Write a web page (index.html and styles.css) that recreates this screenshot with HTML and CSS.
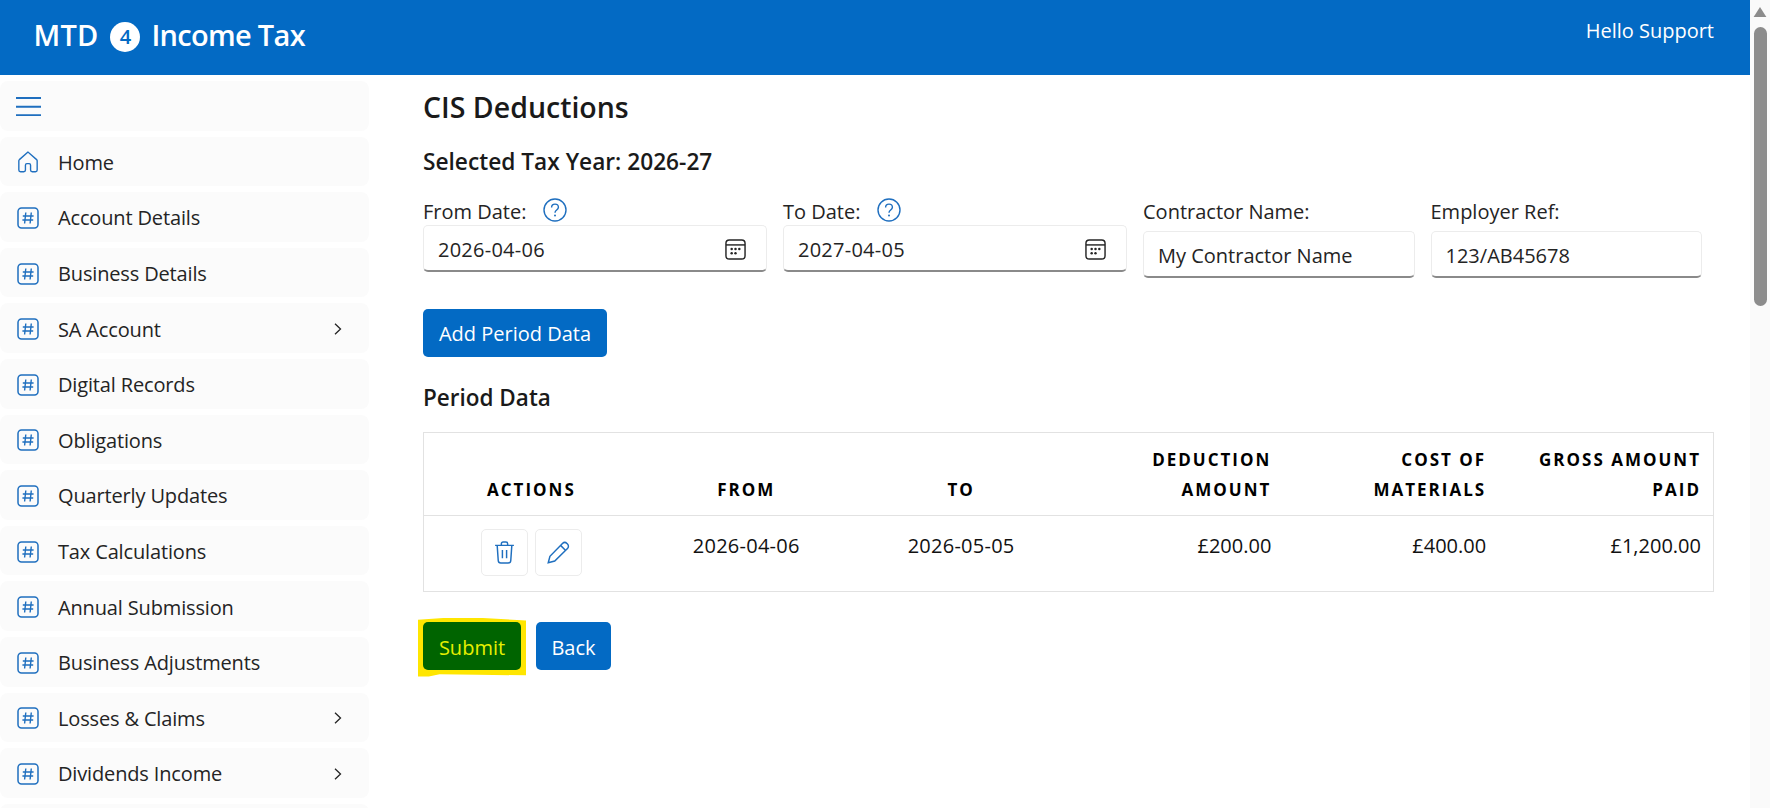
FILE: index.html
```html
<!DOCTYPE html>
<html lang="en">
<head>
<meta charset="utf-8">
<title>CIS Deductions</title>
<link rel="stylesheet" href="styles.css">
</head>
<body>
<svg class="defs" width="0" height="0" aria-hidden="true">
  <symbol id="hash" viewBox="0 0 22 22">
    <rect x="1" y="1" width="20" height="20" rx="3.5" fill="none" stroke="currentColor" stroke-width="1.5"/>
    <path d="M8.8 5.5 7.6 16.5M14.3 5.5l-1.2 11M5.8 9h10.8M5.4 13h10.8" fill="none" stroke="currentColor" stroke-width="1.4"/>
  </symbol>
  <symbol id="chev" viewBox="0 0 8 12">
    <path d="M1 .8 6.5 6 1 11.2" fill="none" stroke="currentColor" stroke-width="1.3"/>
  </symbol>
  <symbol id="help" viewBox="0 0 24 24">
    <circle cx="12" cy="12" r="11" fill="none" stroke="currentColor" stroke-width="1.4"/>
    <path d="M8.6 9.4c0-2 1.5-3.3 3.4-3.3s3.4 1.3 3.4 3.1c0 2.8-3.4 2.8-3.4 5.5" fill="none" stroke="currentColor" stroke-width="1.4"/>
    <circle cx="12" cy="17.6" r="1" fill="currentColor"/>
  </symbol>
  <symbol id="cal" viewBox="0 0 22 22">
    <rect x="1" y="1" width="20" height="20" rx="3.5" fill="none" stroke="currentColor" stroke-width="1.5"/>
    <path d="M1 6.2h20" stroke="currentColor" stroke-width="1.5"/>
    <g fill="currentColor"><circle cx="7" cy="10.5" r="1.3"/><circle cx="11" cy="10.5" r="1.3"/><circle cx="15" cy="10.5" r="1.3"/><circle cx="7" cy="15" r="1.3"/><circle cx="11" cy="15" r="1.3"/></g>
  </symbol>
</svg>

<header class="topbar">
  <div class="brand">
    <span class="brand-short">MTD</span>
    <span class="brand-badge">4</span>
    <span class="brand-name">Income Tax</span>
  </div>
  <div class="greeting">Hello Support</div>
</header>

<div class="layout">
  <nav class="sidebar">
    <div class="nav-item">
      <svg class="burger" viewBox="0 0 25 19"><path d="M0 1h25M0 9.7h25M0 18.3h25" fill="none" stroke="currentColor" stroke-width="1.9"/></svg>
    </div>
    <a class="nav-item">
      <svg class="nav-icon" viewBox="0 0 22 24"><path d="M11 1.2 1.6 9.4c-.4.4-.6.8-.6 1.3v10.1c0 1 .8 1.8 1.8 1.8h3.6c1 0 1.8-.8 1.8-1.8v-5.3c0-1 .7-1.7 1.6-1.7h2.4c.9 0 1.6.7 1.6 1.7v5.3c0 1 .8 1.8 1.8 1.8h3.6c1 0 1.8-.8 1.8-1.8V10.7c0-.5-.2-1-.6-1.3z" fill="none" stroke="currentColor" stroke-width="1.5"/></svg>
      <span class="nav-label">Home</span>
    </a>
    <a class="nav-item"><svg class="nav-icon"><use href="#hash"/></svg><span class="nav-label">Account Details</span></a>
    <a class="nav-item"><svg class="nav-icon"><use href="#hash"/></svg><span class="nav-label">Business Details</span></a>
    <a class="nav-item"><svg class="nav-icon"><use href="#hash"/></svg><span class="nav-label">SA Account</span><svg class="nav-chev"><use href="#chev"/></svg></a>
    <a class="nav-item"><svg class="nav-icon"><use href="#hash"/></svg><span class="nav-label">Digital Records</span></a>
    <a class="nav-item"><svg class="nav-icon"><use href="#hash"/></svg><span class="nav-label">Obligations</span></a>
    <a class="nav-item"><svg class="nav-icon"><use href="#hash"/></svg><span class="nav-label">Quarterly Updates</span></a>
    <a class="nav-item"><svg class="nav-icon"><use href="#hash"/></svg><span class="nav-label">Tax Calculations</span></a>
    <a class="nav-item"><svg class="nav-icon"><use href="#hash"/></svg><span class="nav-label">Annual Submission</span></a>
    <a class="nav-item"><svg class="nav-icon"><use href="#hash"/></svg><span class="nav-label">Business Adjustments</span></a>
    <a class="nav-item"><svg class="nav-icon"><use href="#hash"/></svg><span class="nav-label">Losses &amp; Claims</span><svg class="nav-chev"><use href="#chev"/></svg></a>
    <a class="nav-item"><svg class="nav-icon"><use href="#hash"/></svg><span class="nav-label">Dividends Income</span><svg class="nav-chev"><use href="#chev"/></svg></a>
    <div class="nav-item nav-peek"></div>
  </nav>

  <main class="content">
    <h1 class="page-title">CIS Deductions</h1>
    <h2 class="tax-year">Selected Tax Year: 2026-27</h2>

    <div class="filters">
      <div class="field field-date">
        <div class="label label-date">From Date:<svg class="help"><use href="#help"/></svg></div>
        <div class="input"><span class="num">2026-04-06</span><svg class="cal"><use href="#cal"/></svg></div>
      </div>
      <div class="field field-date">
        <div class="label label-date">To Date:<svg class="help"><use href="#help"/></svg></div>
        <div class="input"><span class="num">2027-04-05</span><svg class="cal"><use href="#cal"/></svg></div>
      </div>
      <div class="field field-text">
        <div class="label label-text">Contractor Name:</div>
        <div class="input"><span>My Contractor Name</span></div>
      </div>
      <div class="field field-text">
        <div class="label label-text">Employer Ref:</div>
        <div class="input"><span>123/AB45678</span></div>
      </div>
    </div>

    <button class="btn btn-add">Add Period Data</button>

    <h3 class="section-title">Period Data</h3>

    <div class="grid">
      <div class="cell head center">Actions</div>
      <div class="cell head center">From</div>
      <div class="cell head center">To</div>
      <div class="cell head right">Deduction Amount</div>
      <div class="cell head right">Cost of Materials</div>
      <div class="cell head right">Gross Amount Paid</div>

      <div class="cell body center actions">
        <span class="icon-btn">
          <svg viewBox="0 0 20 22"><path d="M1 4.2h18M7 4V2.6C7 1.7 7.7 1 8.6 1h2.8c.9 0 1.6.7 1.6 1.6V4M3 4.2l1 14.4c.1 1.3 1.1 2.4 2.4 2.4h7.2c1.3 0 2.3-1.1 2.4-2.4l1-14.4M8 8.5v8M12 8.5v8" fill="none" stroke="currentColor" stroke-width="1.4"/></svg>
        </span>
        <span class="icon-btn">
          <svg viewBox="0 0 22 22"><path d="M1.2 20.8 2.8 14.6 14.8 2.4c1.2-1.2 3.1-1.2 4.3 0l.5.5c1.2 1.2 1.2 3.1 0 4.3L7.4 19.2zM13 4.2l4.8 4.8" fill="none" stroke="currentColor" stroke-width="1.4"/></svg>
        </span>
      </div>
      <div class="cell body center num">2026-04-06</div>
      <div class="cell body center num">2026-05-05</div>
      <div class="cell body right">£200.00</div>
      <div class="cell body right">£400.00</div>
      <div class="cell body right">£1,200.00</div>
    </div>

    <div class="footer-actions">
      <div class="highlight"><button class="btn btn-submit">Submit</button></div>
      <button class="btn">Back</button>
    </div>
  </main>

  <div class="scrollbar">
    <svg class="scroll-arrow" viewBox="0 0 14 11"><path d="M7 0 14 11H0z" fill="currentColor"/></svg>
    <div class="scroll-thumb"></div>
  </div>
</div>
</body>
</html>
```

FILE: styles.css
```css
* { box-sizing: border-box; }

html, body {
  margin: 0;
  height: 100%;
  overflow: hidden;
}

body {
  font-family: "Open Sans", "Noto Sans", sans-serif;
  font-size: 20px;
  color: #111;
  background: #fff;
  position: relative;
}

.defs { position: absolute; }

.topbar {
  height: 75px;
  margin-right: 20px;
  padding: 0 36px 0 33.5px;
  background: #036ac4;
  color: #fff;
  display: flex;
  justify-content: space-between;
  align-items: flex-start;
}

.brand {
  display: flex;
  align-items: center;
  gap: 12px;
  height: 68px;
  font-size: 29px;
  font-weight: 600;
}

.brand-short { letter-spacing: 0.2px; }
.brand-name { letter-spacing: -0.7px; margin-left: -1px; }

.brand-badge {
  width: 30px;
  height: 30px;
  margin-top: 5px;
  border-radius: 50%;
  background: #fff;
  color: #036ac4;
  font-size: 20px;
  line-height: 30px;
  text-align: center;
}

.greeting {
  margin-top: 16px;
  font-size: 20px;
  line-height: 30px;
}

.layout {
  display: flex;
  height: calc(100vh - 75px);
  margin-right: 20px;
}

.sidebar {
  flex: 0 0 369px;
  padding-top: 6px;
  display: flex;
  flex-direction: column;
  gap: 6px;
  overflow: hidden;
}

.nav-item {
  flex: 0 0 49.6px;
  display: flex;
  align-items: center;
  padding: 2px 27px 0 17px;
  border-radius: 8px;
  background: #fbfbfb;
  color: #242424;
}

.burger {
  width: 25px;
  height: 19px;
  margin-left: -1.5px;
  color: #1f6fbf;
}

.nav-icon {
  width: 22px;
  height: 22px;
  color: #1f6fbf;
  flex: none;
}

.nav-label {
  margin-left: 19px;
  flex: 1;
  letter-spacing: -0.15px;
}

.nav-chev {
  width: 8px;
  height: 12px;
  color: #242424;
}

.content {
  flex: 1;
  min-width: 0;
  padding: 0 36px 0 54px;
}

.page-title {
  margin: 11px 0 0;
  font-size: 28.5px;
  line-height: 42px;
  font-weight: 600;
  color: #1a1a1a;
}

.tax-year {
  margin: 19px 0 0;
  font-size: 22.7px;
  line-height: 30px;
  font-weight: 600;
  color: #1a1a1a;
}

.filters {
  display: flex;
  align-items: flex-start;
  gap: 16px;
  margin-top: 19px;
}

.field-date { flex: 0 0 344px; }
.field-text { flex: 0 0 271.5px; }

.label {
  font-size: 20px;
  color: #242424;
}

.label-date {
  height: 29px;
  line-height: 32px;
  display: flex;
  align-items: flex-start;
}

.label-text {
  height: 35px;
  line-height: 32px;
}

.help {
  width: 24px;
  height: 24px;
  margin: 2px 0 0 17px;
  color: #1f6fbf;
}

.input {
  height: 47px;
  padding: 3px 20px 0 14px;
  display: flex;
  align-items: center;
  justify-content: space-between;
  background: #fff;
  border: 1px solid #ececec;
  border-bottom: 2px solid #8a8a8a;
  border-radius: 5px;
  font-size: 20px;
  color: #242424;
}

.num { letter-spacing: 0.25px; }

.cal {
  width: 21px;
  height: 21px;
  color: #242424;
}

.btn {
  display: inline-block;
  height: 48px;
  padding: 0 12px;
  border: 0;
  border-radius: 5px;
  background: #036ac4;
  color: #fff;
  font: inherit;
}

.btn-add {
  display: block;
  margin-top: 31px;
  width: 184px;
}

.section-title {
  margin: 24.5px 0 0;
  font-size: 22.5px;
  line-height: 32px;
  font-weight: 600;
  color: #1a1a1a;
}

.grid {
  display: grid;
  grid-template-columns: repeat(6, 1fr);
  margin-top: 18px;
  height: 160px;
  grid-template-rows: 83px 1fr;
  border: 1px solid #e2e2e2;
}

.cell {
  padding: 0 12px;
}

.head {
  display: flex;
  flex-direction: column;
  justify-content: flex-end;
  padding-bottom: 10px;
  font-size: 17px;
  font-weight: 700;
  line-height: 30px;
  letter-spacing: 2px;
  text-transform: uppercase;
  color: #000;
  border-bottom: 1px solid #e2e2e2;
}

.body {
  padding-top: 15px;
  line-height: 30px;
  color: #111;
}

.center { text-align: center; }
.right { text-align: right; }

.actions {
  display: flex;
  justify-content: center;
  gap: 7px;
  padding-top: 13px;
}

.icon-btn {
  width: 47px;
  height: 47px;
  display: flex;
  align-items: center;
  justify-content: center;
  background: #fff;
  border: 1px solid #ececec;
  border-radius: 5px;
  color: #1f6fbf;
}

.icon-btn svg {
  width: 23px;
  height: 23px;
}

.footer-actions {
  display: flex;
  gap: 15px;
  margin-top: 30px;
}

.footer-actions .btn {
  padding-top: 3px;
}

.highlight {
  position: relative;
}

.highlight::before {
  content: "";
  position: absolute;
  inset: -4px -5px -7px -5px;
  background: #ffe600;
  clip-path: polygon(0 4%, 30% 0, 60% 1%, 100% 5%, 100% 98%, 55% 97%, 20% 96%, 10% 100%, 0 100%);
}

.btn-submit {
  position: relative;
  display: block;
  width: 98px;
  background: #006400;
  color: #e6f000;
}

.footer-actions > .btn {
  width: 75px;
}

.scrollbar {
  position: fixed;
  top: 0;
  right: 0;
  bottom: 0;
  width: 20px;
  background: #fafafa;
  display: flex;
  flex-direction: column;
  align-items: center;
  padding-top: 7px;
}

.scroll-arrow {
  width: 14px;
  height: 10px;
  color: #8c8c8c;
}

.scroll-thumb {
  width: 13px;
  height: 279px;
  margin-top: 10px;
  border-radius: 7px;
  background: #8c8c8c;
}
```
